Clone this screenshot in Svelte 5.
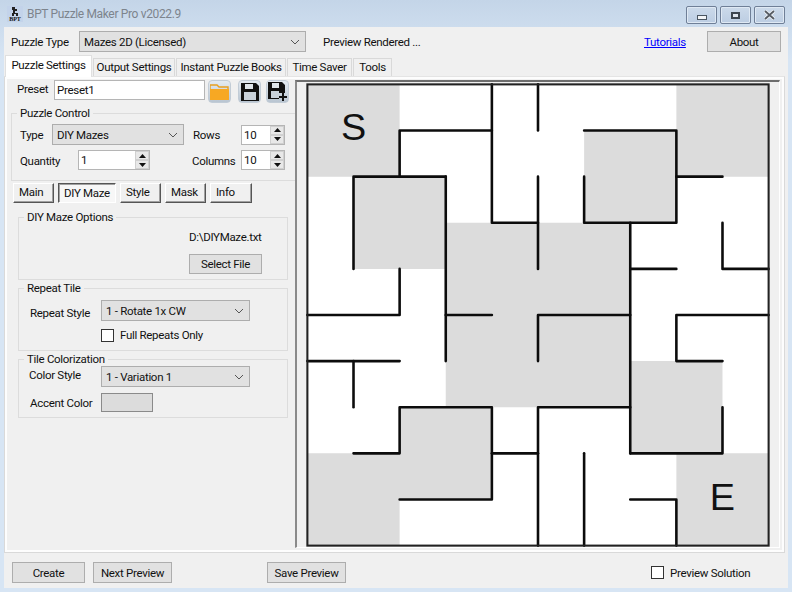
<script>
    const subTabs = ["Main", "DIY Maze", "Style", "Mask", "Info"];
    const tabs = [
        { name: "Output Settings", width: 82 },
        { name: "Instant Puzzle Books", width: 110 },
        { name: "Time Saver", width: 65 },
        { name: "Tools", width: 39 },
    ];

    // maze in grid units, 10 x 10 cells
    const shaded = [
        [0, 0, 2, 2], [8, 0, 2, 2], [6, 1, 2, 2], [1, 2, 2, 2], [3, 3, 4, 4],
        [7, 6, 2, 2], [2, 7, 2, 2], [0, 8, 2, 2], [8, 8, 2, 2],
    ];
    // one path so neighbouring blocks have no seam between them
    const shadedPath = shaded.map(([x, y, w, h]) => `M${x} ${y}h${w}v${h}h${-w}z`).join("");
    const walls = [
        "M4 0V3H5", "M2 2V1H4", "M1 4V2H3", "M3 2V6", "M2 4V5H0",
        "M5 0V1", "M5 2V4", "M4 5H3", "M5 6V5H7", "M7 3V8",
        "M6 2V3H8V1H6", "M8 2H9", "M9 3V4H10", "M7 4H8", "M10 5H8V6H9",
        "M9 7V8H7", "M7 9H8V10", "M6 8V10", "M7 7H5V10", "M4 8H5",
        "M0 6H2", "M1 6V7", "M1 8H2V7H4V9H2",
    ];
</script>

{#snippet chevron()}
    <svg class="chevron" width="10" height="6" viewBox="0 0 10 6"><path d="M1 1l4 4 4-4" fill="none" stroke="#555" stroke-width="1" /></svg>
{/snippet}

{#snippet spinner()}
    <span class="spinner">
        <span class="spin-btn"><svg width="7" height="4" viewBox="0 0 7 4"><path d="M3.5 0L7 4H0z" fill="#111" /></svg></span>
        <span class="spin-btn"><svg width="7" height="4" viewBox="0 0 7 4"><path d="M0 0H7L3.5 4z" fill="#111" /></svg></span>
    </span>
{/snippet}

<div class="window">
    <header class="titlebar">
        <svg class="app-icon" width="16" height="16" viewBox="0 0 16 16">
            <rect width="16" height="16" fill="#c3d3ea" />
            <path d="M5 1h3v2h2v2H8v2h3v3H9V8H7v2H5V7h1V4H5z" fill="#222" />
            <text x="8" y="15" text-anchor="middle" class="app-icon-text">BPT</text>
        </svg>
        <span class="title">BPT Puzzle Maker Pro v2022.9</span>
        <div class="win-btns">
            <div class="win-btn"><span class="glyph-min"></span></div>
            <div class="win-btn"><span class="glyph-max"></span></div>
            <div class="win-btn">
                <svg width="13" height="10" viewBox="0 0 13 10">
                    <path d="M2 1l9 8M11 1l-9 8" stroke="#f4f6f8" stroke-width="3.4" fill="none" />
                    <path d="M2 1l9 8M11 1l-9 8" stroke="#565c64" stroke-width="1.8" fill="none" />
                </svg>
            </div>
        </div>
    </header>

    <div class="client">
        <div class="toprow">
            <span class="type-label">Puzzle Type</span>
            <div class="select type-select">Mazes 2D (Licensed){@render chevron()}</div>
            <span class="rendered">Preview Rendered ...</span>
            <a class="link" href="#tutorials">Tutorials</a>
            <button class="btn about">About</button>
        </div>

        <div class="tabs">
            <div class="tab active">Puzzle Settings</div>
            {#each tabs as tab}
                <div class="tab" style="width: {tab.width}px">{tab.name}</div>
            {/each}
        </div>

        <div class="tabbody">
            <div class="settings">
                <div class="preset">
                    <span class="preset-label">Preset</span>
                    <input class="text preset-input" value="Preset1" readonly />
                    <div class="icon-btn">
                        <svg width="19" height="16" viewBox="0 0 19 16">
                            <path d="M0 1h7l2 2h9v3H0z" fill="none" stroke="#e8a020" stroke-width="1.4" />
                            <path d="M0 5h19v11H0z" fill="#f7a823" />
                        </svg>
                    </div>
                    <div class="icon-btn save-a">
                        <svg width="18" height="18" viewBox="0 0 18 18">
                            <path d="M0 0h15l3 3v15H0z" fill="#111" />
                            <path d="M4 1h8v5H4z" fill="#dfe5ea" />
                            <path d="M3 9h12v8H3z" fill="#c9d2da" />
                        </svg>
                    </div>
                    <div class="icon-btn save-b">
                        <svg width="19" height="19" viewBox="0 0 19 19">
                            <path d="M0 0h14l3 3v8h-6v6H0z" fill="#111" />
                            <path d="M4 1h7v5H4z" fill="#dfe5ea" />
                            <path d="M3 9h8v7H3z" fill="#c9d2da" />
                            <path d="M14 11h2v3h3v2h-3v3h-2v-3h-3v-2h3z" fill="#111" />
                        </svg>
                    </div>
                </div>

                <fieldset class="group control">
                    <legend>Puzzle Control</legend>
                    <div class="control-row first">
                        <span class="l-type">Type</span>
                        <div class="select s-type">DIY Mazes{@render chevron()}</div>
                        <span class="l-rows">Rows</span>
                        <div class="num n-small">10{@render spinner()}</div>
                    </div>
                    <div class="control-row second">
                        <span class="l-qty">Quantity</span>
                        <div class="num n-qty">1{@render spinner()}</div>
                        <span class="l-cols">Columns</span>
                        <div class="num n-small">10{@render spinner()}</div>
                    </div>
                </fieldset>

                <div class="subtabs">
                    {#each subTabs as t}
                        <div class="subtab" class:on={t === "DIY Maze"} class:wide={t === "DIY Maze"} class:info={t === "Info"}>{t}</div>
                    {/each}
                </div>

                <fieldset class="group inner diy">
                    <legend>DIY Maze Options</legend>
                    <div class="file">D:\DIYMaze.txt</div>
                    <button class="btn select-file">Select File</button>
                </fieldset>

                <fieldset class="group inner repeat">
                    <legend>Repeat Tile</legend>
                    <div class="field">
                        <span class="f-label repeat-style">Repeat Style</span>
                        <div class="select s-wide">1 - Rotate 1x CW{@render chevron()}</div>
                    </div>
                    <label class="check full"><span class="box"></span>Full Repeats Only</label>
                </fieldset>

                <fieldset class="group inner color">
                    <legend>Tile Colorization</legend>
                    <div class="field">
                        <span class="f-label color-style">Color Style</span>
                        <div class="select s-wide">1 - Variation 1{@render chevron()}</div>
                    </div>
                    <div class="field accent">
                        <span class="f-label">Accent Color</span>
                        <div class="swatch"></div>
                    </div>
                </fieldset>
            </div>

            <div class="preview">
                <svg class="maze" width="464" height="464" viewBox="-0.03 -0.03 10.06 10.06">
                    <rect width="10" height="10" fill="#fff" />
                    <path d={shadedPath} fill="#dcdcdc" />
                    <text class="mark" x="1" y="1.21" text-anchor="middle">S</text>
                    <text class="mark" x="9" y="9.23" text-anchor="middle">E</text>
                    {#each walls as d}
                        <path {d} fill="none" stroke="#0c0c0c" stroke-width="0.056" stroke-linecap="round" stroke-linejoin="round" />
                    {/each}
                    <rect width="10" height="10" fill="none" stroke="#222" stroke-width="0.045" />
                </svg>
            </div>
        </div>

        <div class="bottom">
            <button class="btn create">Create</button>
            <button class="btn next">Next Preview</button>
            <button class="btn save">Save Preview</button>
            <label class="check solution"><span class="box"></span>Preview Solution</label>
        </div>
    </div>
</div>

<style>
    :global(body) {
        margin: 0;
    }

    .window {
        width: 792px;
        height: 592px;
        overflow: hidden;
        box-sizing: border-box;
        padding: 0 4px 4px 4px;
        background: linear-gradient(#c4d5e8, #d7e5f4 60px);
        font-family: Roboto, "Liberation Sans", sans-serif;
        font-size: 11.5px;
        letter-spacing: -0.3px;
        white-space: nowrap;
        color: #111;
        display: flex;
        flex-direction: column;
    }

    .titlebar {
        height: 27px;
        flex: none;
        display: flex;
        align-items: center;
    }

    .app-icon {
        margin: 1px 0 0 3px;
    }

    .app-icon-text {
        font-family: "Liberation Serif", serif;
        font-size: 6px;
        font-weight: bold;
        letter-spacing: 0;
        fill: #111;
    }

    .title {
        margin-left: 4px;
        font-size: 12px;
        letter-spacing: -0.35px;
        color: #7d848d;
    }

    .win-btns {
        margin-left: auto;
        margin-right: 3px;
        margin-top: 3px;
        display: flex;
        gap: 3px;
    }

    .win-btn {
        width: 29px;
        height: 16px;
        border: 1px solid #6f7f97;
        border-radius: 2px;
        background: linear-gradient(#ccdaea, #bccde2);
        box-shadow: inset 0 0 0 1px #dfe9f4;
        display: flex;
        align-items: center;
        justify-content: center;
    }

    .glyph-min {
        width: 8px;
        height: 3px;
        margin-top: 5px;
        border: 1px solid #4a5560;
        background: #f2f4f6;
    }

    .glyph-max {
        width: 5px;
        height: 3px;
        border: 2px solid #3d4650;
        background: #dfe6ee;
    }

    .client {
        flex: 1;
        background: #f0f0f0;
        display: flex;
        flex-direction: column;
        min-height: 0;
    }

    .toprow {
        height: 21px;
        margin-top: 4px;
        display: flex;
        align-items: center;
    }

    .type-label {
        margin-left: 7px;
        width: 68px;
    }

    .select {
        box-sizing: border-box;
        height: 21px;
        padding-left: 4px;
        border: 1px solid #adadad;
        background: #e1e1e1;
        display: flex;
        align-items: center;
        justify-content: space-between;
    }

    .chevron {
        margin-right: 5px;
        flex: none;
    }

    .type-select {
        width: 227px;
    }

    .rendered {
        margin-left: 17px;
        width: 321px;
    }

    .link {
        width: 63px;
        color: #0000ff;
    }

    .btn {
        box-sizing: border-box;
        height: 21px;
        padding: 0;
        border: 1px solid #adadad;
        background: #e1e1e1;
        font: inherit;
        letter-spacing: inherit;
        color: inherit;
    }

    .about {
        width: 74px;
    }

    .tabs {
        height: 21px;
        margin: 3px 0 0 1px;
        display: flex;
        align-items: flex-end;
        position: relative;
        z-index: 1;
    }

    .tab {
        box-sizing: border-box;
        height: 18px;
        padding-top: 1px;
        margin-right: 1px;
        border: 1px solid #d9d9d9;
        border-bottom: 0;
        background: #f0f0f0;
        line-height: 15px;
        text-align: center;
    }

    .tab.active {
        width: 87px;
        height: 22px;
        margin-bottom: -1px;
        padding-top: 2px;
        background: #fff;
        border-color: #e0e0e0;
    }

    .tabbody {
        box-sizing: border-box;
        width: 781px;
        height: 477px;
        padding: 3px 0 0 4px;
        border: 1px solid #d9d9d9;
        border-top-color: #e4e4e4;
        box-shadow: inset 0 0 0 2px #fdfdfd;
        background: #f0f0f0;
        display: flex;
    }

    .settings {
        width: 286px;
        flex: none;
    }

    .preset {
        display: flex;
        height: 24px;
    }

    .preset-label {
        margin: 2px 0 0 8px;
        width: 37px;
    }

    .text {
        box-sizing: border-box;
        font: inherit;
        letter-spacing: inherit;
        color: inherit;
        padding: 0 2px;
        outline: none;
        border: 1px solid #b5b5b5;
        background: #fff;
    }

    .preset-input {
        width: 151px;
        height: 20px;
    }

    .icon-btn {
        box-sizing: border-box;
        width: 23px;
        height: 23px;
        margin-left: 3px;
        border: 1px solid #c2ccd6;
        border-radius: 4px;
        background: linear-gradient(#e4ebf2, #b9c5d1);
        display: flex;
        align-items: center;
        justify-content: center;
    }

    .save-a {
        margin-left: 7px;
    }

    .save-b {
        margin-left: 5px;
    }

    .group {
        box-sizing: border-box;
        margin: 0;
        padding: 0;
        min-width: 0;
        border: 1px solid #dcdcdc;
    }

    legend {
        margin-left: 5px;
        padding: 0 3px 0 3px;
        line-height: 14px;
    }

    .control {
        width: 285px;
        height: 75px;
        margin: 2px 0 0 2px;
    }

    .control-row {
        display: flex;
        align-items: center;
    }

    .first {
        height: 21px;
        margin-top: 4px;
    }

    .second {
        height: 20px;
        margin-top: 5px;
    }

    .l-type {
        margin: 1px 0 0 8px;
        width: 32px;
    }

    .s-type {
        width: 132px;
    }

    .l-rows {
        margin-left: 9px;
        width: 48px;
    }

    .num {
        box-sizing: border-box;
        height: 20px;
        padding-left: 2px;
        border: 1px solid #b5b5b5;
        background: #fff;
        display: flex;
        align-items: center;
        justify-content: space-between;
    }

    .n-small {
        width: 44px;
    }

    .n-qty {
        width: 72px;
    }

    .l-qty {
        margin: 2px 0 0 8px;
        width: 58px;
    }

    .l-cols {
        margin: 2px 0 0 42px;
        width: 49px;
    }

    .spinner {
        width: 14px;
        height: 18px;
        display: flex;
        flex-direction: column;
    }

    .spin-btn {
        flex: 1;
        background: #e8e8e8;
        border: 1px solid #d0d0d0;
        display: flex;
        align-items: center;
        justify-content: center;
    }

    .subtabs {
        display: flex;
        gap: 4px;
        margin: 2px 0 0 4px;
    }

    .subtab {
        box-sizing: border-box;
        width: 41px;
        height: 20px;
        padding-left: 5px;
        line-height: 17px;
        background: #f0f0f0;
        border: 1px solid;
        border-color: #fff #555 #555 #fff;
        box-shadow: inset -1px -1px 0 #a0a0a0;
    }

    .subtab.wide {
        width: 58px;
        padding-top: 1px;
    }

    .subtab.info {
        width: 42px;
    }

    .subtab.on {
        border-color: #555 #fff #fff #555;
        background: #f7f7f7;
        box-shadow: inset 1px 1px 0 #a0a0a0;
    }

    .inner {
        width: 270px;
        margin: 0 0 0 9px;
    }

    .diy {
        height: 70px;
        margin-top: 7px;
    }

    .file {
        margin: 6px 0 0 170px;
        line-height: 14px;
    }

    .select-file {
        display: block;
        width: 73px;
        height: 20px;
        margin: 10px 0 0 170px;
    }

    .repeat {
        height: 70px;
        margin-top: 1px;
    }

    .field {
        display: flex;
        align-items: center;
    }

    .repeat .field {
        margin-top: 5px;
    }

    .f-label {
        padding-left: 11px;
        box-sizing: border-box;
        margin-top: 1px;
        flex: none;
        width: 82px;
    }

    .repeat-style {
        margin-top: 4px;
    }

    .color-style {
        margin-top: -4px;
        padding-left: 10px;
    }

    .s-wide {
        width: 149px;
    }

    .check {
        display: flex;
        align-items: center;
    }

    .box {
        box-sizing: border-box;
        width: 13px;
        height: 13px;
        margin-right: 6px;
        border: 1px solid #333;
        background: #fff;
    }

    .full {
        margin: 7px 0 0 82px;
    }

    .color {
        height: 66px;
        margin-top: 1px;
    }

    .accent {
        margin-top: 6px;
    }

    .swatch {
        box-sizing: border-box;
        width: 52px;
        height: 19px;
        border: 1px solid #8a8a8a;
        background: #dcdcdc;
    }

    .preview {
        box-sizing: border-box;
        width: 485px;
        height: 468px;
        padding: 1px 0 0 9px;
        border-top: 2px solid #6d6d6d;
        border-left: 2px solid #8a8a8a;
        border-right: 1px solid #fff;
        border-bottom: 1px solid #fff;
    }

    .maze {
        display: block;
    }

    .mark {
        font-family: "Liberation Sans", sans-serif;
        font-size: 0.82px;
        letter-spacing: 0;
        fill: #111;
    }

    .bottom {
        height: 21px;
        margin-top: 9px;
        display: flex;
        align-items: center;
    }

    .create {
        width: 73px;
        margin-left: 8px;
    }

    .next {
        width: 79px;
        margin-left: 8px;
    }

    .save {
        width: 79px;
        margin-left: 95px;
    }

    .solution {
        margin-left: 305px;
    }
</style>
